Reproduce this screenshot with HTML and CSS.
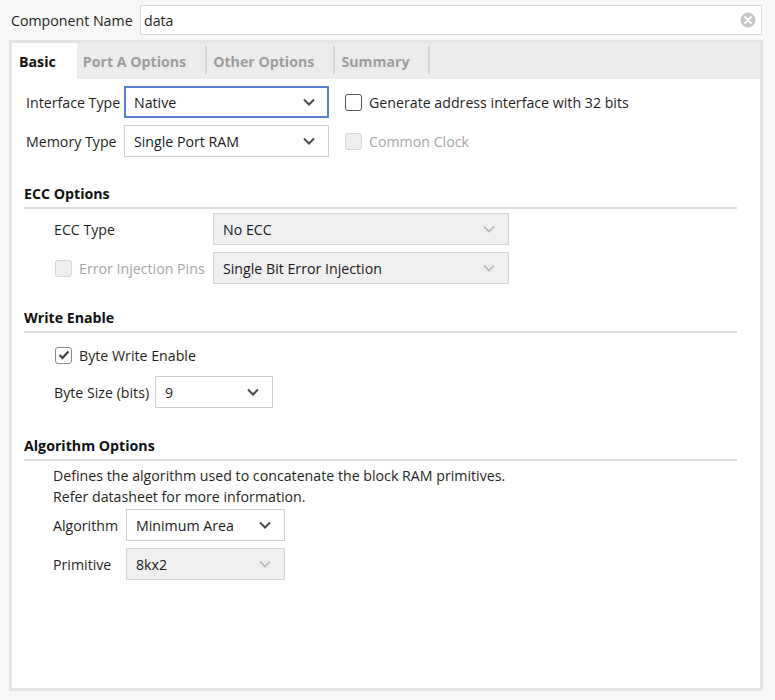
FILE: index.html
```html
<!DOCTYPE html>
<html>
<head>
<meta charset="utf-8">
<link rel="stylesheet" href="styles.css">
</head>
<body>
<div class="top">
  <span class="cn-label">Component Name</span>
  <div class="name-input">
    <span class="name-val">data</span>
    <svg class="clear" width="16" height="16" viewBox="0 0 16 16"><circle cx="8" cy="8" r="7.5" fill="#c6c6c6"/><path d="M5 5 L11 11 M11 5 L5 11" stroke="#fff" stroke-width="2" stroke-linecap="round"/></svg>
  </div>
</div>
<div class="frame">
  <div class="tabs">
    <div class="tab active">Basic</div>
    <div class="tab">Port A Options</div>
    <div class="tab">Other Options</div>
    <div class="tab">Summary</div>
  </div>
  <div class="panel">
    <div class="basic-grid">
      <span class="lbl">Interface Type</span>
      <div class="select focus"><span>Native</span><svg class="chev" width="12" height="8" viewBox="0 0 12 8"><path d="M1 1.5 L6 6.5 L11 1.5" fill="none" stroke="#4a4a4a" stroke-width="2"/></svg></div>
      <div class="check"><span class="box"></span><span>Generate address interface with 32 bits</span></div>
      <span class="lbl">Memory Type</span>
      <div class="select"><span>Single Port RAM</span><svg class="chev" width="12" height="8" viewBox="0 0 12 8"><path d="M1 1.5 L6 6.5 L11 1.5" fill="none" stroke="#4a4a4a" stroke-width="2"/></svg></div>
      <div class="check disabled"><span class="box"></span><span>Common Clock</span></div>
    </div>

    <section class="sec sec-ecc">
      <div class="sec-head">ECC Options</div>
      <div class="grid-ecc">
        <span class="lbl ind">ECC Type</span>
        <div class="select disabled"><span>No ECC</span><svg class="chev" width="12" height="8" viewBox="0 0 12 8"><path d="M1 1.5 L6 6.5 L11 1.5" fill="none" stroke="#b4b4b4" stroke-width="1.6"/></svg></div>
        <div class="check disabled ind1"><span class="box"></span><span>Error Injection Pins</span></div>
        <div class="select disabled"><span>Single Bit Error Injection</span><svg class="chev" width="12" height="8" viewBox="0 0 12 8"><path d="M1 1.5 L6 6.5 L11 1.5" fill="none" stroke="#b4b4b4" stroke-width="1.6"/></svg></div>
      </div>
    </section>

    <section class="sec sec-we">
      <div class="sec-head">Write Enable</div>
      <div class="we-body">
        <div class="check checked ind1 row32"><span class="box"><svg width="14" height="14" viewBox="0 0 14 14"><path d="M2.5 7 L5.5 10 L11.5 3.5" fill="none" stroke="#3a3a3a" stroke-width="2"/></svg></span><span>Byte Write Enable</span></div>
        <div class="grid-bs">
          <span class="lbl ind">Byte Size (bits)</span>
          <div class="select"><span>9</span><svg class="chev" width="12" height="8" viewBox="0 0 12 8"><path d="M1 1.5 L6 6.5 L11 1.5" fill="none" stroke="#4a4a4a" stroke-width="2"/></svg></div>
        </div>
      </div>
    </section>

    <section class="sec sec-alg">
      <div class="sec-head">Algorithm Options</div>
      <p class="desc">Defines the algorithm used to concatenate the block RAM primitives.<br>Refer datasheet for more information.</p>
      <div class="grid-alg">
        <span class="lbl ind2">Algorithm</span>
        <div class="select"><span>Minimum Area</span><svg class="chev" width="12" height="8" viewBox="0 0 12 8"><path d="M1 1.5 L6 6.5 L11 1.5" fill="none" stroke="#4a4a4a" stroke-width="2"/></svg></div>
        <span class="lbl ind2">Primitive</span>
        <div class="select disabled"><span>8kx2</span><svg class="chev" width="12" height="8" viewBox="0 0 12 8"><path d="M1 1.5 L6 6.5 L11 1.5" fill="none" stroke="#b4b4b4" stroke-width="1.6"/></svg></div>
      </div>
    </section>
  </div>
</div>
</body>
</html>
```

FILE: styles.css
```css
* { box-sizing: border-box; }
html, body { height: 100%; }
body {
  margin: 0;
  background: #f7f7f7;
  font-family: "Open Sans", "Noto Sans", sans-serif;
  font-size: 14.2px;
  color: #1f1f1f;
  display: flex;
  flex-direction: column;
  padding-top: 5px;
}
.top {
  display: flex;
  align-items: center;
  height: 30px;
  padding: 0 13px 0 11px;
}
.cn-label { width: 129px; }
.name-input {
  flex: 1;
  height: 30px;
  background: #fff;
  border: 1px solid #d8d8d8;
  display: flex;
  align-items: center;
  padding: 0 5px 0 3px;
}
.name-val { flex: 1; }
.clear { display: block; }

.frame {
  flex: 1;
  margin: 5px 12px 9px 9px;
  border: 3px solid #e4e4e4;
  display: flex;
  flex-direction: column;
  background: #fff;
}
.tabs {
  display: flex;
  height: 36px;
  background: #ececec;
}
.tab {
  font-weight: bold;
  color: #9c9c9c;
  padding: 0 21px 0 6px;
  display: flex;
  align-items: center;
  position: relative;
}
.tab::after {
  content: "";
  position: absolute;
  right: 0;
  top: 3px;
  bottom: 5px;
  border-right: 2px solid #d6d6d6;
}
.tab.active {
  background: #fff;
  color: #111;
  padding: 0 21px 0 7px;
}
.tab.active::after { display: none; }

.panel {
  flex: 1;
  padding: 7px 23px 0 12px;
}
.basic-grid {
  display: grid;
  grid-template-columns: 98px 205px auto;
  grid-template-rows: 32px 32px;
  row-gap: 7px;
  align-items: center;
  padding-left: 2px;
}
.basic-grid .check { margin-left: 16px; }

.lbl { white-space: nowrap; }
.lbl.ind { padding-left: 30px; }
.lbl.ind2 { padding-left: 29px; }

.select {
  height: 32px;
  border: 1px solid #cfcfcf;
  background: #fff;
  display: flex;
  align-items: center;
  justify-content: space-between;
  padding: 0 13px 0 9px;
  color: #1a1a1a;
}
.select.focus {
  border: 2px solid #5583d2;
  padding: 0 12px 0 8px;
}
.select.disabled {
  background: #efefef;
  border-color: #d4d4d4;
}
.chev { display: block; }

.check {
  display: flex;
  align-items: center;
  gap: 7px;
  white-space: nowrap;
}
.check .box {
  width: 17px;
  height: 17px;
  border: 1.5px solid #555;
  border-radius: 3px;
  background: #fff;
  display: flex;
  align-items: center;
  justify-content: center;
}
.check.checked .box { border-color: #8a8a8a; }
.check.disabled { color: #a6a6a6; }
.check.disabled .box {
  background: #eeeeee;
  border-color: #d6d6d6;
}
.ind1 { padding-left: 31px; }
.row32 { height: 32px; }

.sec-head {
  font-weight: bold;
  color: #111;
  line-height: 20px;
  padding-bottom: 3px;
  border-bottom: 2px solid #dedede;
}
.sec-ecc { margin-top: 27px; }
.sec-we { margin-top: 24px; }
.sec-alg { margin-top: 28px; }

.grid-ecc {
  margin-top: 4px;
  display: grid;
  grid-template-columns: 189px 296px;
  grid-template-rows: 32px 32px;
  row-gap: 7px;
  align-items: center;
}
.we-body { margin-top: 6px; }
.grid-bs {
  margin-top: 5px;
  display: grid;
  grid-template-columns: 131px 118px;
  grid-template-rows: 32px;
  align-items: center;
}
.desc {
  margin: 4px 0 0 29px;
  line-height: 21px;
}
.grid-alg {
  margin-top: 2px;
  display: grid;
  grid-template-columns: 102px 159px;
  grid-template-rows: 32px 32px;
  row-gap: 7px;
  align-items: center;
}
```
